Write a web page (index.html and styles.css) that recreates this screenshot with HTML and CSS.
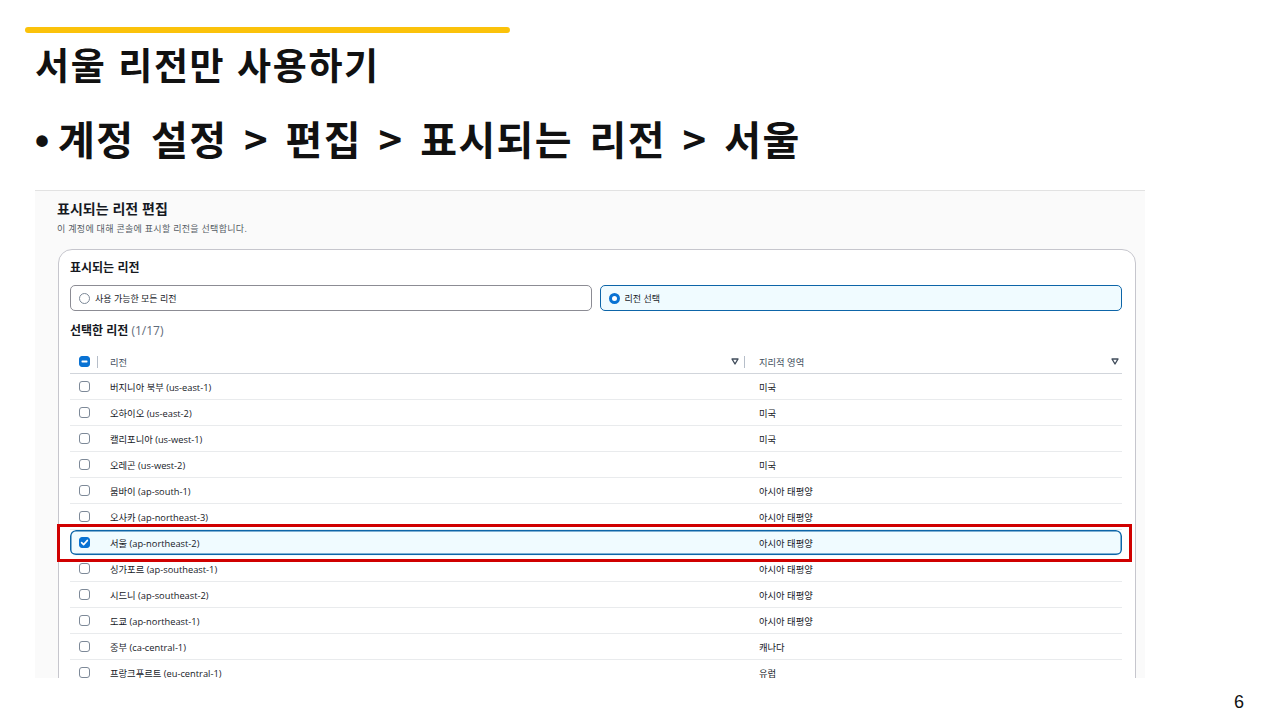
FILE: index.html
```html
<!DOCTYPE html>
<html lang="ko">
<head>
  <meta charset="UTF-8">
  <title>서울 리전만 사용하기</title>
  <link rel="stylesheet" href="styles.css">
</head>
<body>
  <div class="slide">
    <div class="accent"></div>
    <h1 class="title">서울 리전만 사용하기</h1>
    <ul class="steps">
      <li>계정 설정 &gt; 편집 &gt; 표시되는 리전 &gt; 서울</li>
    </ul>

    <!-- 콘솔 캡처 -->
    <section class="shot">
      <h2 class="edit-title">표시되는 리전 편집</h2>
      <p class="edit-desc">이 계정에 대해 콘솔에 표시할 리전을 선택합니다.</p>

      <div class="panel">
        <h3 class="panel-title">표시되는 리전</h3>
        <div class="tiles">
          <label class="tile"><span class="radio"></span>사용 가능한 모든 리전</label>
          <label class="tile on"><span class="radio on"></span>리전 선택</label>
        </div>

        <div class="sel-title">선택한 리전 <span class="count">(1/17)</span></div>

        <div class="table">
          <div class="thead">
            <div class="c-check">
              <span class="cb mixed"><svg viewBox="0 0 11 11" width="11" height="11"><rect x="2.5" y="4.6" width="6" height="1.8" rx="0.6" fill="#fff"/></svg></span>
            </div>
            <div class="th"><span class="sep"></span><span class="th-label">리전</span><svg class="sort" viewBox="0 0 8 7" width="8" height="7"><polygon points="1,1 7,1 4,6" fill="none" stroke="#414d5c" stroke-width="1.4" stroke-linejoin="round"/></svg></div>
            <div class="th"><span class="sep"></span><span class="th-label">지리적 영역</span><svg class="sort last" viewBox="0 0 8 7" width="8" height="7"><polygon points="1,1 7,1 4,6" fill="none" stroke="#414d5c" stroke-width="1.4" stroke-linejoin="round"/></svg></div>
          </div>

          <div class="row"><div class="c-check"><span class="cb"></span></div><div class="c-name">버지니아 북부 (us-east-1)</div><div class="c-geo">미국</div></div>
          <div class="row"><div class="c-check"><span class="cb"></span></div><div class="c-name">오하이오 (us-east-2)</div><div class="c-geo">미국</div></div>
          <div class="row"><div class="c-check"><span class="cb"></span></div><div class="c-name">캘리포니아 (us-west-1)</div><div class="c-geo">미국</div></div>
          <div class="row"><div class="c-check"><span class="cb"></span></div><div class="c-name">오레곤 (us-west-2)</div><div class="c-geo">미국</div></div>
          <div class="row"><div class="c-check"><span class="cb"></span></div><div class="c-name">뭄바이 (ap-south-1)</div><div class="c-geo">아시아 태평양</div></div>
          <div class="row"><div class="c-check"><span class="cb"></span></div><div class="c-name">오사카 (ap-northeast-3)</div><div class="c-geo">아시아 태평양</div></div>
          <div class="row sel"><div class="c-check"><span class="cb on"><svg viewBox="0 0 11 11" width="11" height="11"><path d="M2.6 5.6 L4.6 7.6 L8.4 3.4" fill="none" stroke="#fff" stroke-width="1.6" stroke-linecap="round" stroke-linejoin="round"/></svg></span></div><div class="c-name">서울 (ap-northeast-2)</div><div class="c-geo">아시아 태평양</div></div>
          <div class="row"><div class="c-check"><span class="cb"></span></div><div class="c-name">싱가포르 (ap-southeast-1)</div><div class="c-geo">아시아 태평양</div></div>
          <div class="row"><div class="c-check"><span class="cb"></span></div><div class="c-name">시드니 (ap-southeast-2)</div><div class="c-geo">아시아 태평양</div></div>
          <div class="row"><div class="c-check"><span class="cb"></span></div><div class="c-name">도쿄 (ap-northeast-1)</div><div class="c-geo">아시아 태평양</div></div>
          <div class="row"><div class="c-check"><span class="cb"></span></div><div class="c-name">중부 (ca-central-1)</div><div class="c-geo">캐나다</div></div>
          <div class="row"><div class="c-check"><span class="cb"></span></div><div class="c-name">프랑크푸르트 (eu-central-1)</div><div class="c-geo">유럽</div></div>
        </div>
      </div>
    </section>

    <div class="page-num">6</div>
  </div>
</body>
</html>
```

FILE: styles.css
```css
* {
  box-sizing: border-box;
}

body {
  margin: 0;
  background-color: #fff;
  font-family: "Noto Sans CJK KR", sans-serif;
  color: #111;
}

.slide {
  width: 1280px;
  height: 720px;
  overflow: hidden;
  padding-top: 27px;
}

.accent {
  margin-left: 25px;
  width: 485px;
  height: 6px;
  border-radius: 3px;
  background-color: #fbc20a;
}

.title {
  margin: 9px 0 0 35px;
  font-size: 37px;
  line-height: 44px;
  font-weight: 700;
  letter-spacing: 1.6px;
}

.steps {
  list-style: none;
  margin: 27px 0 0 35px;
  padding: 0;
  font-size: 40px;
  line-height: 50px;
  font-weight: 700;
  letter-spacing: 1.4px;
  word-spacing: 4px;
}

.steps li::before {
  content: "•";
  display: inline-block;
  width: 23px;
  font-family: "Liberation Sans", sans-serif;
}

/* 캡처 영역 */
.shot {
  margin: 24px 0 0 35px;
  width: 1110px;
  height: 488px;
  overflow: hidden;
  background-color: #fafafa;
  border-top: 1px solid #e2e2e2;
  padding: 7px 9px 0 22px;
  font-family: "Open Sans", "Noto Sans CJK KR", sans-serif;
  color: #16191f;
}

.edit-title {
  margin: 0;
  font-family: "Noto Sans CJK KR", sans-serif;
  font-size: 14px;
  line-height: 20px;
  font-weight: 700;
}

.edit-desc {
  margin: 5px 0 0;
  font-size: 9px;
  line-height: 12px;
  letter-spacing: 0.3px;
  color: #545b64;
}

.panel {
  margin: 14px 0 0 1px;
  height: 520px;
  background-color: #fff;
  border: 1px solid #c6c6cd;
  border-radius: 14px 14px 0 0;
  padding: 9px 13px 0 11px;
}

.panel-title {
  margin: 0;
  font-family: "Noto Sans CJK KR", sans-serif;
  font-size: 12px;
  line-height: 16px;
  font-weight: 700;
}

.tiles {
  display: grid;
  grid-template-columns: 1fr 1fr;
  gap: 8px;
  margin-top: 10px;
}

.tile {
  height: 26px;
  display: flex;
  align-items: center;
  gap: 5px;
  padding-left: 8px;
  border: 1px solid #8c8c94;
  border-radius: 5px;
  font-size: 9px;
}

.tile.on {
  border: 1.5px solid #0d65a8;
  padding-left: 7.5px;
  background-color: #f0fbff;
}

.radio {
  width: 11px;
  height: 11px;
  border-radius: 50%;
  border: 1px solid #7d8998;
  background-color: #fff;
}

.radio.on {
  border: 3.5px solid #0972d3;
}

.sel-title {
  margin-top: 12px;
  font-size: 12px;
  line-height: 16px;
  font-weight: 700;
}

.sel-title .count {
  font-weight: 400;
  color: #5f6b7a;
}

.table {
  margin-top: 11px;
  font-size: 9.3px;
}

.thead,
.row {
  display: grid;
  grid-template-columns: 27px 647px 1fr;
  align-items: center;
}

.thead {
  height: 24px;
  border-bottom: 1px solid #d1d5db;
}

.th {
  display: flex;
  align-items: center;
  height: 100%;
}

.sep {
  width: 1px;
  height: 12px;
  background-color: #b6bec9;
}

.th-label {
  margin-left: 12px;
  color: #414d5c;
}

.th:last-child .th-label {
  margin-left: 14px;
}

.sort {
  margin-left: auto;
  margin-right: 5px;
}

.sort.last {
  margin-right: 3px;
}

.row {
  position: relative;
  height: 26px;
  border-bottom: 1px solid #e9ebed;
}

.row.sel {
  border-bottom-color: transparent;
  border-radius: 6px;
  background-color: #f0fbff;
  box-shadow: inset 0 0 0 1.5px #0d65a8;
}

/* 빨간 강조 박스 */
.row.sel::after {
  content: "";
  position: absolute;
  top: -6px;
  bottom: -7px;
  left: -13px;
  right: -10px;
  border: 3px solid #d00000;
}

.c-check {
  display: flex;
  align-items: center;
  padding-left: 9px;
}

.c-name {
  padding-left: 13px;
}

.c-geo {
  padding-left: 15px;
}

.cb {
  display: block;
  width: 11px;
  height: 11px;
  border: 1px solid #7d8998;
  border-radius: 3px;
  background-color: #fff;
}

.cb svg {
  display: block;
  margin: -1px;
}

.cb.on,
.cb.mixed {
  border-color: #0972d3;
  background-color: #0972d3;
}

.page-num {
  margin-top: 14px;
  padding-right: 36px;
  text-align: right;
  font-family: "Liberation Sans", sans-serif;
  font-size: 18px;
  line-height: 20px;
}
```
